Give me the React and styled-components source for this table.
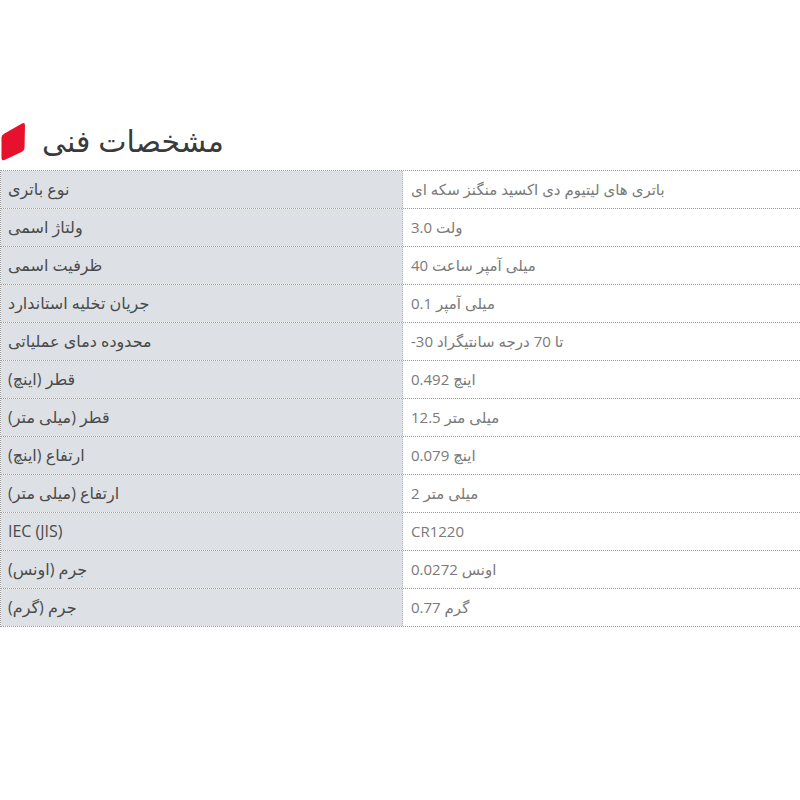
import React from 'react';
import styled, { createGlobalStyle } from 'styled-components';

const specs = [
  { label: 'نوع باتری', value: 'باتری های لیتیوم دی اکسید منگنز سکه ای' },
  { label: 'ولتاژ اسمی', value: 'ولت 3.0' },
  { label: 'ظرفیت اسمی', value: 'میلی آمپر ساعت 40' },
  { label: 'جریان تخلیه استاندارد', value: 'میلی آمپر 0.1' },
  { label: 'محدوده دمای عملیاتی', value: 'تا 70 درجه سانتیگراد 30-' },
  { label: 'قطر (اینچ)', value: 'اینچ 0.492' },
  { label: 'قطر (میلی متر)', value: 'میلی متر 12.5' },
  { label: 'ارتفاع (اینچ)', value: 'اینچ 0.079' },
  { label: 'ارتفاع (میلی متر)', value: 'میلی متر 2' },
  { label: 'IEC (JIS)', value: 'CR1220' },
  { label: 'جرم (اونس)', value: 'اونس 0.0272' },
  { label: 'جرم (گرم)', value: 'گرم 0.77' },
];

const App = () => {
  return (
    <>
      <GlobalStyle />
      <Page>
        <Header>
          <Mark width="26" height="40" viewBox="0 0 26 40">
            <path
              d="M4.5 12.5 L22 2.6 Q25 1 25 4.5 L24.5 27 Q24.4 29.5 22 30.8 L4.5 39 Q1.5 40.3 1.5 37 L1.5 16.5 Q1.5 14.2 4.5 12.5 Z"
              fill="#e8112d"
            />
          </Mark>
          <Title>مشخصات فنی</Title>
        </Header>
        <Table>
          {specs.map((row) => (
            <Row key={row.label}>
              <Label>{row.label}</Label>
              <Value>{row.value}</Value>
            </Row>
          ))}
        </Table>
      </Page>
    </>
  );
};

const GlobalStyle = createGlobalStyle`
  body {
    margin: 0;
    background: #fff;
    font-family: "Open Sans", "DejaVu Sans", sans-serif;
  }
`;

const Page = styled.div`
  width: 800px;
  padding-top: 117px;
`;

const Header = styled.div`
  display: flex;
  align-items: center;
  height: 50px;
  gap: 16px;
  padding-left: 0;
  margin-bottom: 3px;
`;

const Mark = styled.svg`
  display: block;
  margin-top: -2px;
`;

const Title = styled.h2`
  margin: 0;
  margin-top: -4px;
  font-size: 30px;
  font-weight: 400;
  color: #3a3a3a;
  direction: rtl;
`;

const Table = styled.div`
  display: flex;
  flex-direction: column;
  border-top: 1px dotted #9a9a9a;
  border-left: 1px dotted #9a9a9a;
`;

const Row = styled.div`
  display: grid;
  grid-template-columns: 402px 1fr;
  height: 38px;
  border-bottom: 1px dotted #9a9a9a;
  box-sizing: border-box;
`;

const Cell = styled.div`
  display: flex;
  align-items: center;
  padding: 0 8px;
  font-size: 15px;
  unicode-bidi: plaintext;
  text-align: left;
  justify-content: flex-start;
  padding-bottom: 2px;
`;

const Label = styled(Cell)`
  background: #dde1e5;
  color: #4a4a4a;
  border-right: 1px dotted #b8b8b8;
  padding-left: 7px;
  font-size: 16px;
`;

const Value = styled(Cell)`
  background: #fff;
  color: #7a7a7a;
`;

export default App;
